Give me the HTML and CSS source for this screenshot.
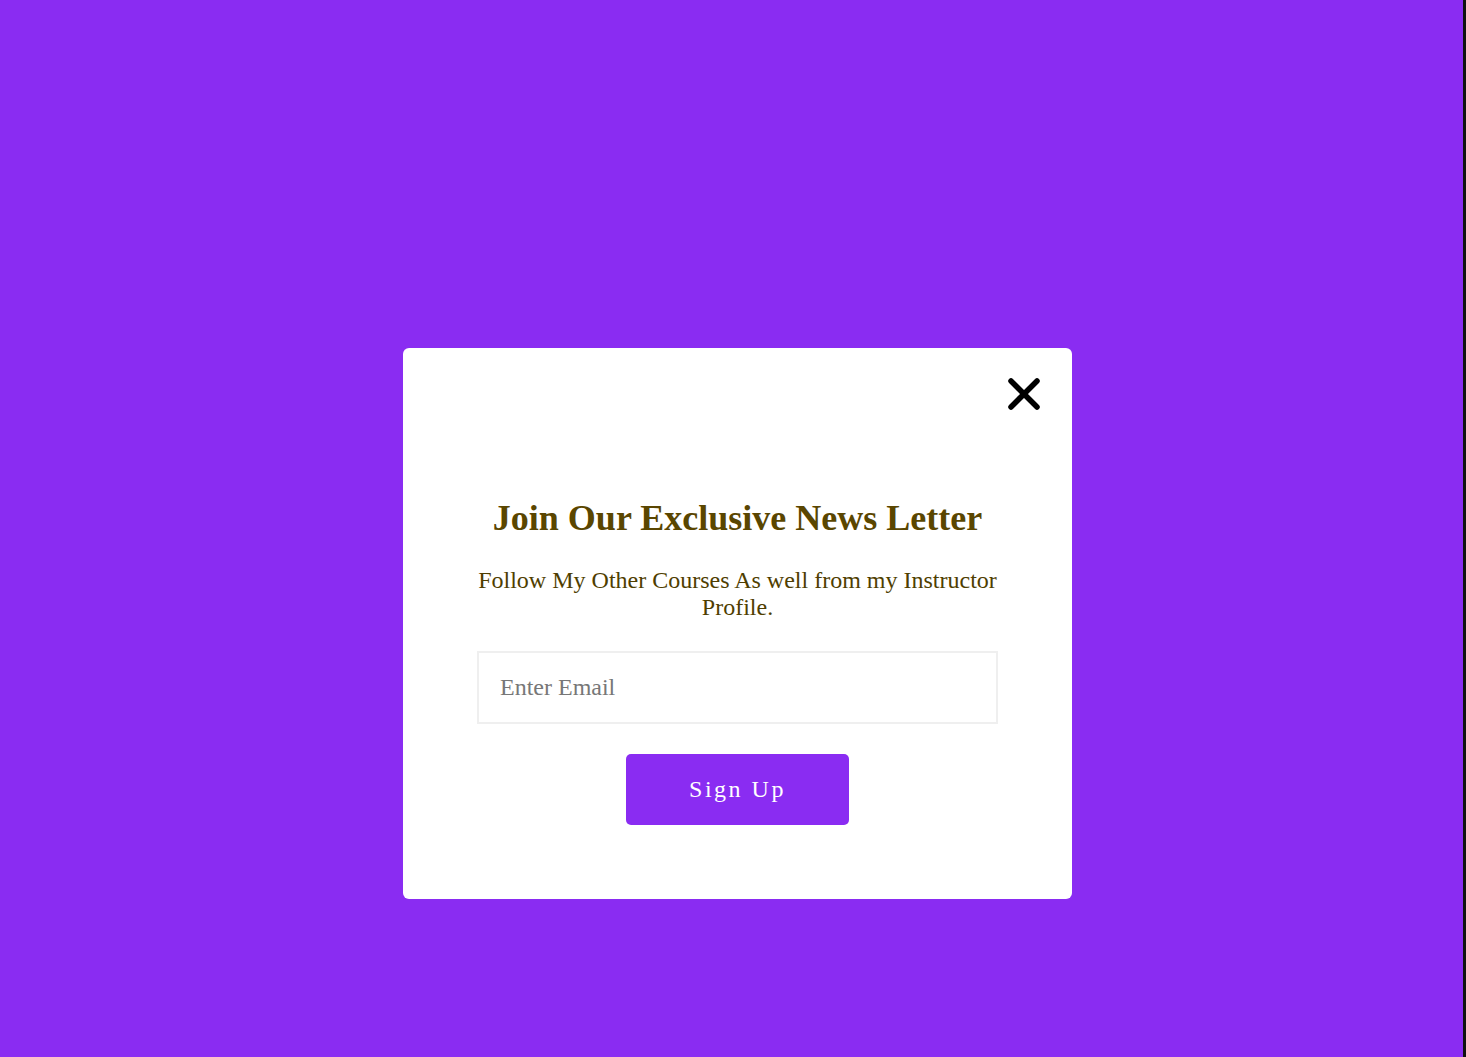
FILE: index.html
```html
<!DOCTYPE html>
<html lang="en">
<head>
<meta charset="utf-8">
<title>Newsletter</title>
<link rel="stylesheet" href="styles.css">
</head>
<body>
<div class="page">
  <div class="modal">
    <button class="close" aria-label="Close">
      <svg width="34" height="34" viewBox="0 0 34 34"><path d="M4 4 L30 30 M30 4 L4 30" stroke="#000" stroke-width="5.5" stroke-linecap="round" fill="none"/></svg>
    </button>
    <h1 class="title">Join Our Exclusive News Letter</h1>
    <p class="text">Follow My Other Courses As well from my Instructor Profile.</p>
    <input class="email" type="email" placeholder="Enter Email">
    <button class="signup">Sign Up</button>
  </div>
</div>
</body>
</html>
```

FILE: styles.css
```css
html, body {
  margin: 0;
  padding: 0;
  height: 100%;
}
body {
  background: #8a2cf2;
  font-family: "Liberation Serif", "Times New Roman", serif;
}
.page {
  box-sizing: border-box;
  height: 100%;
  padding: 348px 0 0 403px;
  border-right: 3px solid #111;
}
.modal {
  position: relative;
  box-sizing: border-box;
  width: 669px;
  height: 551px;
  background: #fff;
  border-radius: 6px;
  padding: 150px 74px 0;
  display: flex;
  flex-direction: column;
  align-items: center;
}
.close {
  position: absolute;
  top: 29px;
  right: 31px;
  padding: 0;
  border: 0;
  background: none;
  width: 34px;
  height: 34px;
  cursor: pointer;
}
.close svg { display: block; }
.title {
  margin: 0;
  font-size: 36px;
  line-height: 41px;
  font-weight: bold;
  color: #5a4600;
  text-align: center;
}
.text {
  margin: 28px 0 0;
  font-size: 24px;
  color: #4f3e00;
  text-align: center;
  line-height: 27px;
}
.email {
  box-sizing: border-box;
  margin-top: 30px;
  width: 521px;
  height: 73px;
  border: 2px solid #efefef;
  padding: 0 21px;
  font-family: "Liberation Serif", "Times New Roman", serif;
  font-size: 24px;
  outline: none;
}
.email::placeholder { color: #777; }
.signup {
  margin-top: 30px;
  width: 223px;
  height: 71px;
  border: 0;
  border-radius: 5px;
  background: #8a2cf2;
  color: #fff;
  font-family: "Liberation Serif", "Times New Roman", serif;
  font-size: 24px;
  letter-spacing: 2.5px;
  cursor: pointer;
}
```
